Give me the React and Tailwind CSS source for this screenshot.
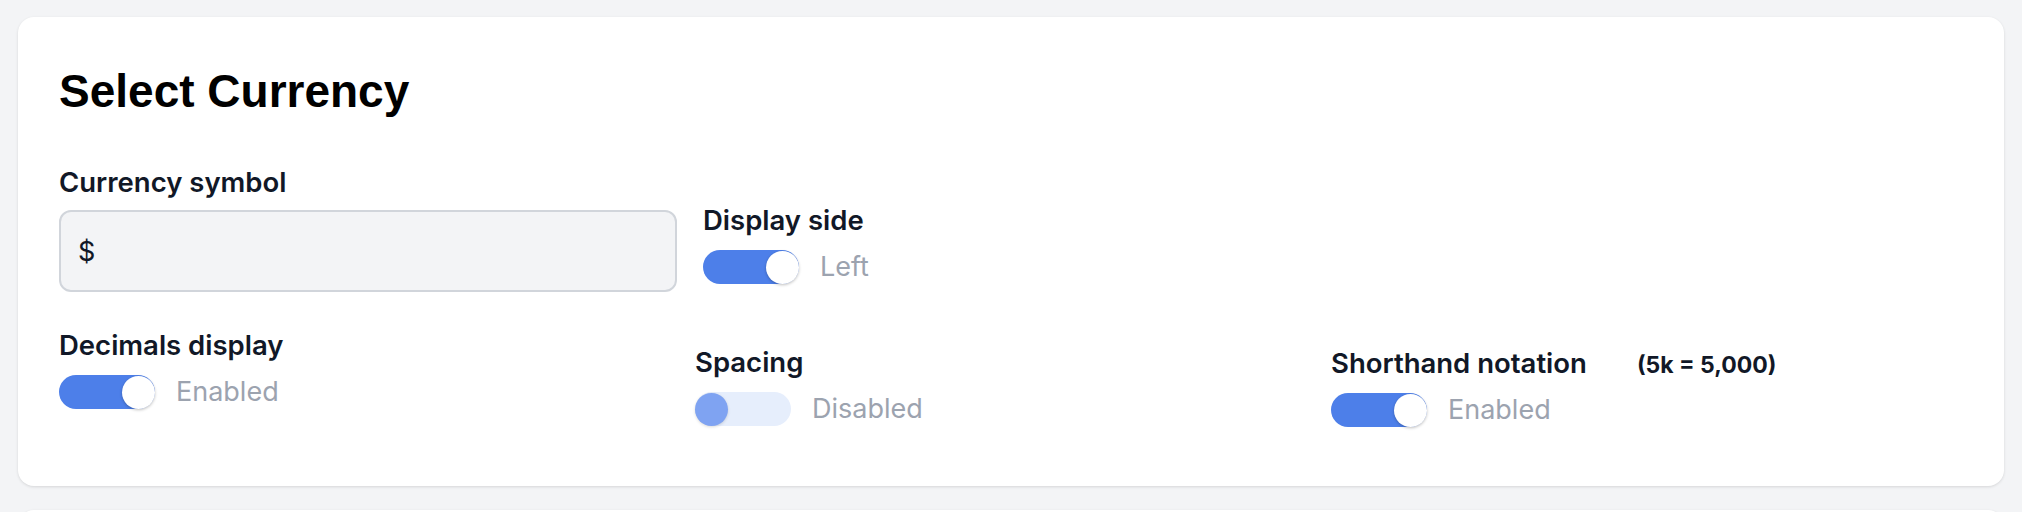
import React, { useState } from 'react'

function Toggle(props)
{
    const { on, text } = props

    return (
        <div className="mt-[17px] flex items-center gap-[21px]">
            {on ? (
                <div className="flex h-[34px] w-[96px] items-center justify-end rounded-full bg-[#4d7fe9]">
                    <div className="h-[33px] w-[33px] rounded-full bg-white shadow-[0_1px_3px_rgba(0,0,0,0.25)]"></div>
                </div>
            ) : (
                <div className="flex h-[34px] w-[96px] items-center justify-start rounded-full bg-[#e6eefc]">
                    <div className="h-[33px] w-[33px] rounded-full bg-[#7fa3f2] shadow-[0_1px_3px_rgba(0,0,0,0.15)]"></div>
                </div>
            )}
            <span className="text-[27px] leading-[34px] text-[#9ca3af]">{text}</span>
        </div>
    )
}

function Label(props)
{
    return (
        <div className="text-[27.5px] font-semibold leading-[26px] text-[#111827]">{props.children}</div>
    )
}

export default function App()
{
    const [symbol, setSymbol] = useState('$')

    return (
        <div className="min-h-screen bg-[#f3f4f6] px-[18px] pt-[17px] font-['Inter',sans-serif]">
            <div className="h-[469px] rounded-2xl bg-white px-[41px] pt-[52px] shadow-[0_1px_3px_rgba(0,0,0,0.12)]">
                <h1 className="font-['Liberation_Sans',Arial,sans-serif] text-[46px] font-bold leading-[45px] text-black">Select Currency</h1>

                <div className="mt-[55px] flex gap-[26px]">
                    <div className="w-[618px]">
                        <Label>Currency symbol</Label>
                        <input
                            className="mt-[15px] h-[82px] w-full rounded-xl border-2 border-[#d1d5db] bg-[#f3f4f6] px-[17px] text-[27px] text-[#111827] outline-none"
                            value={symbol}
                            onChange={(e) => setSymbol(e.target.value)}
                        />
                    </div>
                    <div className="mt-[38px]">
                        <Label>Display side</Label>
                        <Toggle on={true} text="Left" />
                    </div>
                </div>

                <div className="mt-[40px] grid grid-cols-[636px_636px_1fr]">
                    <div>
                        <Label>Decimals display</Label>
                        <Toggle on={true} text="Enabled" />
                    </div>
                    <div className="pt-[17px]">
                        <Label>Spacing</Label>
                        <Toggle on={false} text="Disabled" />
                    </div>
                    <div className="pt-[18px]">
                        <div className="flex h-[26px] items-baseline gap-[50px]">
                            <Label>Shorthand notation</Label>
                            <span className="text-[23px] font-bold leading-none text-[#111827]">(5k = 5,000)</span>
                        </div>
                        <Toggle on={true} text="Enabled" />
                    </div>
                </div>
            </div>

            <div className="mt-[24px] h-[200px] rounded-2xl bg-white shadow-[0_1px_3px_rgba(0,0,0,0.12)]"></div>
        </div>
    )
}
